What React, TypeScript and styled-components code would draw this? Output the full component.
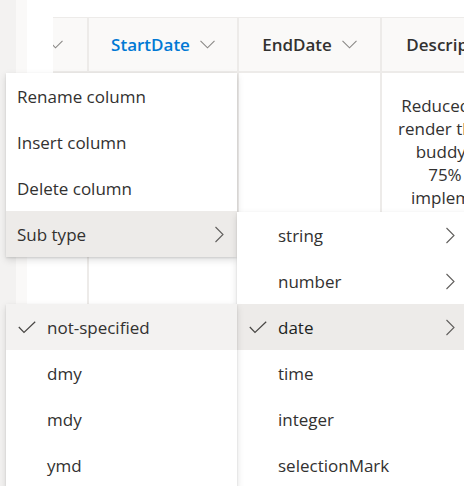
import React from "react";
import styled, { createGlobalStyle } from "styled-components";

const Global = createGlobalStyle`
  html, body { margin: 0; padding: 0; background: #ffffff; overflow: hidden; }
  body { font-family: "Open Sans", "Noto Sans", Arial, sans-serif; }
`;

const Page = styled.div`
  position: relative;
  width: 464px;
  height: 486px;
  overflow: hidden;
  display: flex;
  background: #ffffff;
`;

const LeftRail = styled.div`
  width: 16px;
  flex: none;
  background: #f3f2f1;
`;

const RailEdge = styled.div`
  width: 11px;
  flex: none;
  background: #faf9f8;
`;

const Grid = styled.div`
  flex: none;
  display: flex;
  flex-direction: column;
  padding-top: 17px;
`;

const HeaderRow = styled.div`
  display: flex;
  height: 56px;
  flex: none;
`;

const HeaderCell = styled.div<{ $w: number; $blank?: boolean; $end?: boolean }>`
  width: ${(p) => p.$w}px;
  flex: none;
  box-sizing: border-box;
  display: flex;
  align-items: center;
  justify-content: ${(p) => (p.$end ? "flex-end" : "center")};
  padding-right: ${(p) => (p.$end ? 24 : 0)}px;
  gap: 10px;
  overflow: hidden;
  background: ${(p) => (p.$blank ? "#ffffff" : "#faf9f8")};
  border-top: ${(p) => (p.$blank ? "none" : "1px solid #edebe9")};
  border-bottom: ${(p) => (p.$blank ? "none" : "2px solid #edebe9")};
  border-right: ${(p) => (p.$blank ? "none" : "2px solid #edebe9")};
`;

const HeaderText = styled.span<{ $accent?: boolean }>`
  font-size: 17px;
  font-weight: 600;
  color: ${(p) => (p.$accent ? "#0078d4" : "#323130")};
  white-space: nowrap;
`;

const BodyRow = styled.div`
  display: flex;
  flex: 1;
`;

const BodyCell = styled.div<{ $w: number; $blank?: boolean }>`
  width: ${(p) => p.$w}px;
  flex: none;
  box-sizing: border-box;
  border-right: ${(p) => (p.$blank ? "none" : "2px solid #edebe9")};
  padding-top: 21px;
  display: flex;
  flex-direction: column;
  align-items: center;
`;

const CellLine = styled.div`
  font-size: 17px;
  line-height: 23px;
  color: #323130;
  white-space: nowrap;
`;

const Menu = styled.div<{ $top: number; $left: number }>`
  position: absolute;
  top: ${(p) => p.$top}px;
  left: ${(p) => p.$left}px;
  width: 231px;
  background: #ffffff;
  box-shadow: 0 3.2px 7.2px rgba(0, 0, 0, 0.132), 0 0.6px 1.8px rgba(0, 0, 0, 0.108);
  display: flex;
  flex-direction: column;
`;

const Item = styled.div<{ $hl?: "strong" | "soft"; $checks?: boolean }>`
  height: 46px;
  box-sizing: border-box;
  display: flex;
  align-items: center;
  padding: 0 13px 0 ${(p) => (p.$checks ? 12 : 11)}px;
  background: ${(p) =>
    p.$hl === "strong" ? "#edebe9" : p.$hl === "soft" ? "#f3f2f1" : "#ffffff"};
`;

const CheckSlot = styled.span`
  width: 29px;
  flex: none;
  display: flex;
  align-items: center;
`;

const Label = styled.span<{ $selected?: boolean }>`
  flex: 1;
  font-size: 17px;
  color: ${(p) => (p.$selected ? "#201f1e" : "#323130")};
  white-space: nowrap;
`;

const ChevronRight = () => (
  <svg width="10" height="17" viewBox="0 0 10 17">
    <polyline points="1.5,1 9,8.5 1.5,16" fill="none" stroke="#605e5c" strokeWidth="1.1" />
  </svg>
);

const ChevronDown = () => (
  <svg width="15" height="9" viewBox="0 0 15 9" style={{ flex: "none" }}>
    <polyline points="0.5,0.8 7.5,7.8 14.5,0.8" fill="none" stroke="#8a8886" strokeWidth="1.1" />
  </svg>
);

const Check = () => (
  <svg width="18" height="13" viewBox="0 0 18 13">
    <polyline points="0.8,6 6,11.5 17.2,0.8" fill="none" stroke="#484644" strokeWidth="1.2" />
  </svg>
);

type Entry = { label: string; sub?: boolean; checked?: boolean; hl?: "strong" | "soft" };

const MenuList = ({ items, checks, top, left }: { items: Entry[]; checks?: boolean; top: number; left: number }) => (
  <Menu $top={top} $left={left}>
    {items.map((it) => (
      <Item key={it.label} $hl={it.hl} $checks={checks}>
        {checks && <CheckSlot>{it.checked && <Check />}</CheckSlot>}
        <Label $selected={it.checked && it.hl === "strong"}>{it.label}</Label>
        {it.sub && <ChevronRight />}
      </Item>
    ))}
  </Menu>
);

const columns = [
  { w: 26, blank: true },
  { w: 36 },
  { w: 150, title: "StartDate", accent: true },
  { w: 143, title: "EndDate" },
  { w: 170, title: "Description" },
];

const descLines = ["Reduced time to", "render the friend", "buddy list by", "75% after", "implementing"];

export default function App() {
  return (
    <>
      <Global />
      <Page>
        <LeftRail />
        <RailEdge />
        <Grid>
          <HeaderRow>
            {columns.map((c, i) => (
              <HeaderCell key={i} $w={c.w} $blank={c.blank} $end={i === 1}>
                {c.title && <HeaderText $accent={c.accent}>{c.title}</HeaderText>}
                {!c.blank && <ChevronDown />}
              </HeaderCell>
            ))}
          </HeaderRow>
          <BodyRow>
            {columns.map((c, i) => (
              <BodyCell key={i} $w={c.w} $blank={c.blank}>
                {i === 4 && descLines.map((l) => <CellLine key={l}>{l}</CellLine>)}
              </BodyCell>
            ))}
          </BodyRow>
        </Grid>

        <MenuList
          top={73}
          left={6}
          items={[
            { label: "Rename column" },
            { label: "Insert column" },
            { label: "Delete column" },
            { label: "Sub type", sub: true, hl: "strong" },
          ]}
        />
        <MenuList
          top={212}
          left={237}
          checks
          items={[
            { label: "string", sub: true },
            { label: "number", sub: true },
            { label: "date", sub: true, checked: true, hl: "strong" },
            { label: "time" },
            { label: "integer" },
            { label: "selectionMark" },
          ]}
        />
        <MenuList
          top={304}
          left={6}
          checks
          items={[
            { label: "not-specified", checked: true, hl: "soft" },
            { label: "dmy" },
            { label: "mdy" },
            { label: "ymd" },
          ]}
        />
      </Page>
    </>
  );
}
